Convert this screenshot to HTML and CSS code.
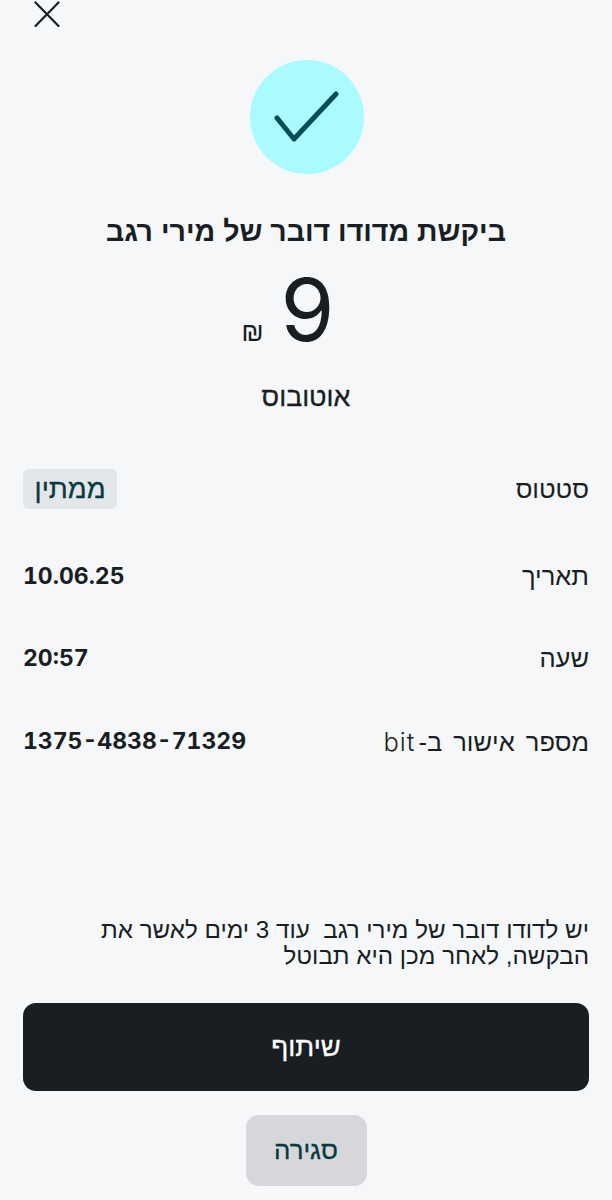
FILE: index.html
```html
<!DOCTYPE html>
<html lang="he" dir="rtl">
  <head>
    <title>בקשה</title>
    <meta charset="utf-8"/>
    <link rel="stylesheet" href="styles.css">
  </head>
  <body>
    <div class="page">
      <div class="top-bar">
        <svg class="close-icon" width="26" height="26" viewBox="0 0 26 26" fill="none" stroke="#191e23" stroke-width="2.2" stroke-linecap="round">
          <path d="M1.5 1.5 L24.5 25 M24.5 1.5 L1.5 25"/>
        </svg>
      </div>

      <div class="check-circle">
        <svg width="66" height="52" viewBox="0 0 66 52" fill="none" stroke="#004c5c" stroke-width="5" stroke-linecap="round" stroke-linejoin="round">
          <path d="M3 27 L20 48 L62 3"/>
        </svg>
      </div>

      <h1 class="title">ביקשת מדודו דובר של מירי רגב</h1>

      <div class="amount">
        <span class="amount-value">9</span>
        <span class="amount-currency">₪</span>
      </div>

      <p class="reason">אוטובוס</p>

      <div class="details">
        <div class="row row-status">
          <span class="label">סטטוס</span>
          <span class="badge">ממתין</span>
        </div>
        <div class="row row-date">
          <span class="label">תאריך</span>
          <span class="value">10.06.25</span>
        </div>
        <div class="row row-time">
          <span class="label">שעה</span>
          <span class="value">20:57</span>
        </div>
        <div class="row row-code">
          <span class="label">מספר אישור ב-<span class="bit">bit</span></span>
          <span class="value">1375-4838-71329</span>
        </div>
      </div>

      <p class="note">יש לדודו דובר של מירי רגב&nbsp; עוד 3 ימים לאשר את הבקשה, לאחר מכן היא תבוטל</p>

      <button class="btn-share">שיתוף</button>
      <button class="btn-close">סגירה</button>
    </div>
  </body>
</html>
```

FILE: styles.css
```css
html, body {
  margin: 0;
  padding: 0;
  background-color: #f5f7f9;
}
body {
  color: #191e23;
  font-family: "Liberation Sans", "Noto Sans", sans-serif;
}
.page {
  display: flex;
  flex-direction: column;
  align-items: center;
  height: 1200px;
  padding: 0 23px;
  box-sizing: border-box;
  overflow: hidden;
}

/* top */
.top-bar {
  align-self: stretch;
  display: flex;
  justify-content: flex-end;
  height: 60px;
  padding: 1px 0 0 11px;
  box-sizing: border-box;
}
.check-circle {
  display: flex;
  align-items: center;
  justify-content: center;
  width: 114px;
  height: 114px;
  margin-left: 1px;
  border-radius: 50%;
  background-color: #a9fbff;
}
.title {
  margin: 39px 0 0;
  font-size: 28.5px;
  line-height: 36px;
  font-weight: bold;
}
.amount {
  display: flex;
  align-items: baseline;
  gap: 17px;
  height: 100px;
  margin: 11px 36px 0 0;
}
.amount-value {
  font-family: Inter, "Liberation Sans", sans-serif;
  font-size: 87px;
  line-height: 100px;
}
.amount-currency {
  font-size: 26px;
}
.reason {
  margin: 22px 0 0;
  font-size: 26.8px;
  line-height: 30px;
  -webkit-text-stroke: 0.3px #191e23;
}

/* details */
.details {
  align-self: stretch;
  margin-top: 57px;
  font-size: 25.5px;
}
.row {
  display: flex;
  justify-content: space-between;
  align-items: center;
  height: 40px;
}
.row-date { margin-top: 47px; }
.row-time { margin-top: 42px; }
.row-code { margin-top: 43px; }
.row-code .label { word-spacing: 4px; }
.bit {
  margin-right: 3px;
  letter-spacing: 1px;
  font-family: Inter, "Liberation Sans", sans-serif;
  font-weight: 300;
}
.value {
  font-family: Inter, "Liberation Sans", sans-serif;
  font-size: 23px;
  font-weight: bold;
  font-feature-settings: "tnum";
  direction: ltr;
}
.badge {
  padding: 0 11.5px;
  line-height: 40px;
  font-size: 27.5px;
  color: #07393f;
  background-color: #e4e7e9;
  border-radius: 6px;
  -webkit-text-stroke: 0.3px #07393f;
}

/* bottom */
.note {
  align-self: stretch;
  margin: 156px 0 0;
  font-size: 24.2px;
  line-height: 26px;
}
.btn-share,
.btn-close {
  border: none;
  font-family: inherit;
}
.btn-share {
  align-self: stretch;
  height: 88px;
  margin-top: 34px;
  color: #fff;
  font-size: 27.4px;
  background-color: #191e23;
  border-radius: 13px;
  -webkit-text-stroke: 0.3px #fff;
}
.btn-close {
  width: 121px;
  height: 71px;
  margin-top: 24px;
  color: #07393f;
  font-size: 25.8px;
  background-color: #d5d7da;
  border-radius: 13px;
  -webkit-text-stroke: 0.3px #07393f;
}
```
